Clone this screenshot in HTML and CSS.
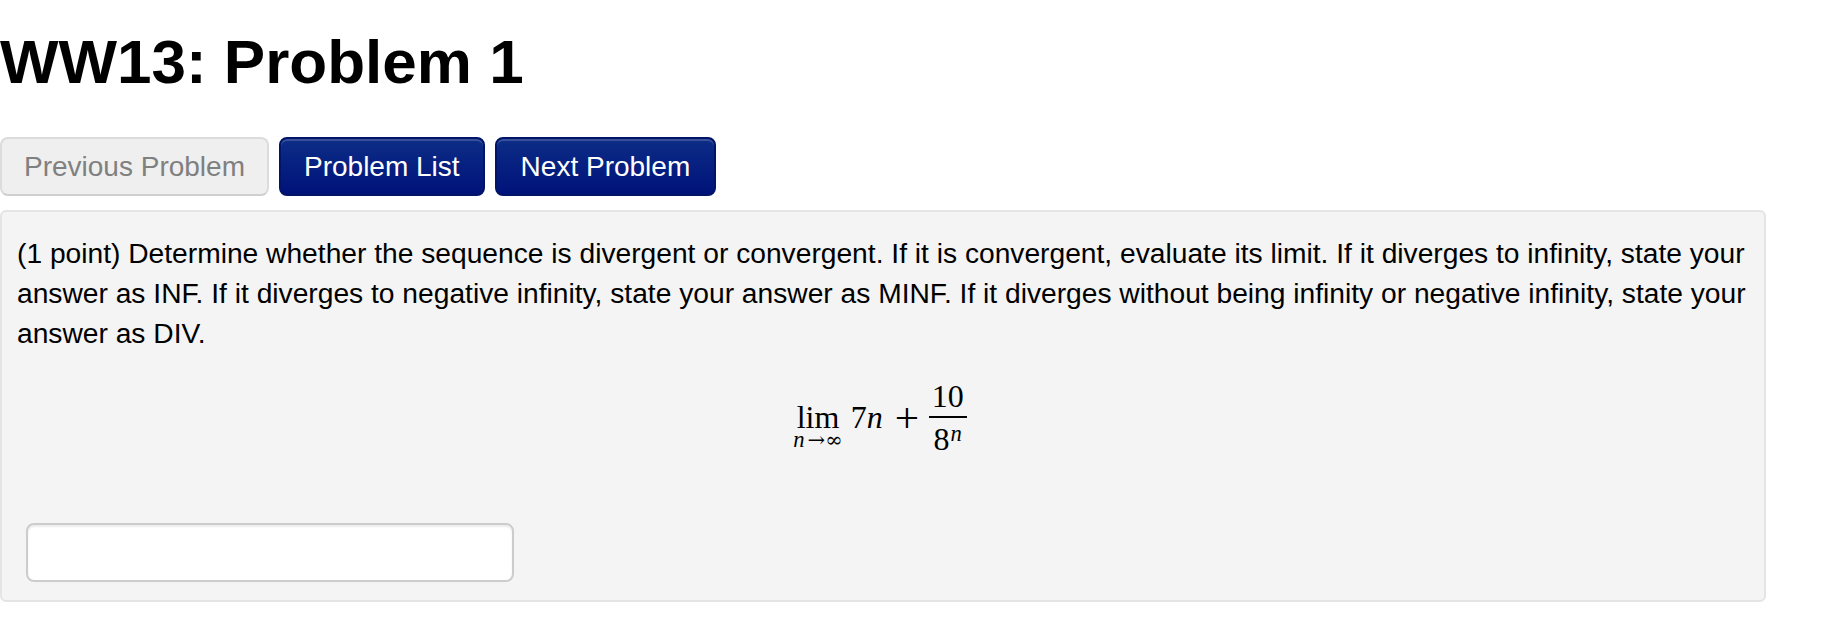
FILE: index.html
```html
<!DOCTYPE html>
<html lang="en">
<head>
<meta charset="utf-8">
<title>WW13: Problem 1</title>
<link rel="stylesheet" href="styles.css">
</head>
<body>
<div class="page">
  <h1 class="title">WW13: Problem 1</h1>
  <div class="nav">
    <span class="btn btn-disabled">Previous Problem</span>
    <a class="btn btn-primary" href="#">Problem List</a>
    <a class="btn btn-primary btn-next" href="#">Next Problem</a>
  </div>
  <div class="problem">
    <p class="statement">(1 point) Determine whether the sequence is divergent or convergent. If it is convergent, evaluate its limit. If it diverges to infinity, state your answer as INF. If it diverges to negative infinity, state your answer as MINF. If it diverges without being infinity or negative infinity, state your answer as DIV.</p>
    <div class="math">
      <span class="limit"><span class="lim">lim</span><span class="under"><i class="var">n</i><span class="sym">→∞</span></span></span><span class="term">7<i>n</i></span><span class="plus">+</span><span class="frac"><span class="num">10</span><span class="bar"></span><span class="den">8<i class="sup">n</i></span></span>
    </div>
    <input class="answer" type="text" aria-label="answer">
  </div>
</div>
</body>
</html>
```

FILE: styles.css
```css
html, body {
  margin: 0;
  padding: 0;
  background: #ffffff;
}

body {
  font-family: "Liberation Sans", Arial, Helvetica, sans-serif;
  color: #000000;
}

.page {
  width: 1766px;
}

.title {
  margin: 0;
  padding-top: 31px;
  font-size: 62px;
  line-height: 62px;
  font-weight: bold;
}

.nav {
  display: flex;
  gap: 10px;
  margin-top: 44px;
}

.btn {
  display: inline-block;
  box-sizing: border-box;
  height: 59px;
  padding: 0 23px;
  border: 2px solid transparent;
  border-radius: 8px;
  font-size: 28px;
  line-height: 55px;
  text-decoration: none;
  white-space: nowrap;
}

.btn-disabled {
  background: #efefef;
  border-color: #dcdcdc;
  border-bottom-color: #cfcfcf;
  color: #808080;
  padding: 0 22px;
}

.btn-primary {
  background: linear-gradient(#0c2d86, #00127a);
  border-color: #001468;
  color: #ffffff;
  box-shadow: inset 0 2px 0 rgba(255, 255, 255, 0.18);
}

.btn-next {
  padding: 0 24px;
}

.problem {
  margin-top: 14px;
  box-sizing: border-box;
  width: 1766px;
  padding: 21px 17px 18px 15px;
  background: #f4f4f4;
  border: 2px solid #e4e4e4;
  border-radius: 6px;
}

.statement {
  margin: 0;
  font-size: 28.2px;
  line-height: 40px;
}

.math {
  margin: 27px 4px 0 0;
  text-align: center;
  font-family: "Liberation Serif", "Times New Roman", serif;
  font-size: 32px;
  line-height: 32px;
}

.math i {
  font-style: italic;
}

.limit {
  display: inline-flex;
  flex-direction: column;
  align-items: center;
  margin-right: 8px;
}

.lim {
  line-height: 32px;
}

.under {
  display: flex;
  align-items: baseline;
  margin-top: -4px;
  font-size: 22.6px;
  line-height: 22.6px;
  white-space: nowrap;
}

.var {
  margin-right: 3px;
}

.sym {
  font-family: "DejaVu Serif", "Liberation Serif", serif;
  font-size: 21px;
}

.plus {
  display: inline-block;
  width: 24px;
  margin: 0 10px 0 12px;
  text-align: center;
  transform: scale(1.35);
}

.frac {
  display: inline-flex;
  flex-direction: column;
  align-items: center;
  vertical-align: 21px;
}

.num {
  padding: 0 3px;
  line-height: 32px;
}

.bar {
  align-self: stretch;
  height: 2px;
  margin: 4px 0 5px;
  background: #000000;
}

.den {
  line-height: 32px;
}

.sup {
  font-size: 22.6px;
  line-height: 0;
  vertical-align: 9px;
  margin-left: 1px;
}

.answer {
  display: block;
  box-sizing: border-box;
  width: 488px;
  height: 59px;
  margin: 68px 0 0 9px;
  padding: 0 12px;
  background: #ffffff;
  border: 2px solid #cccccc;
  border-radius: 8px;
  box-shadow: inset 0 2px 2px rgba(0, 0, 0, 0.075);
  font-family: "Liberation Sans", Arial, sans-serif;
  font-size: 28px;
}
```
